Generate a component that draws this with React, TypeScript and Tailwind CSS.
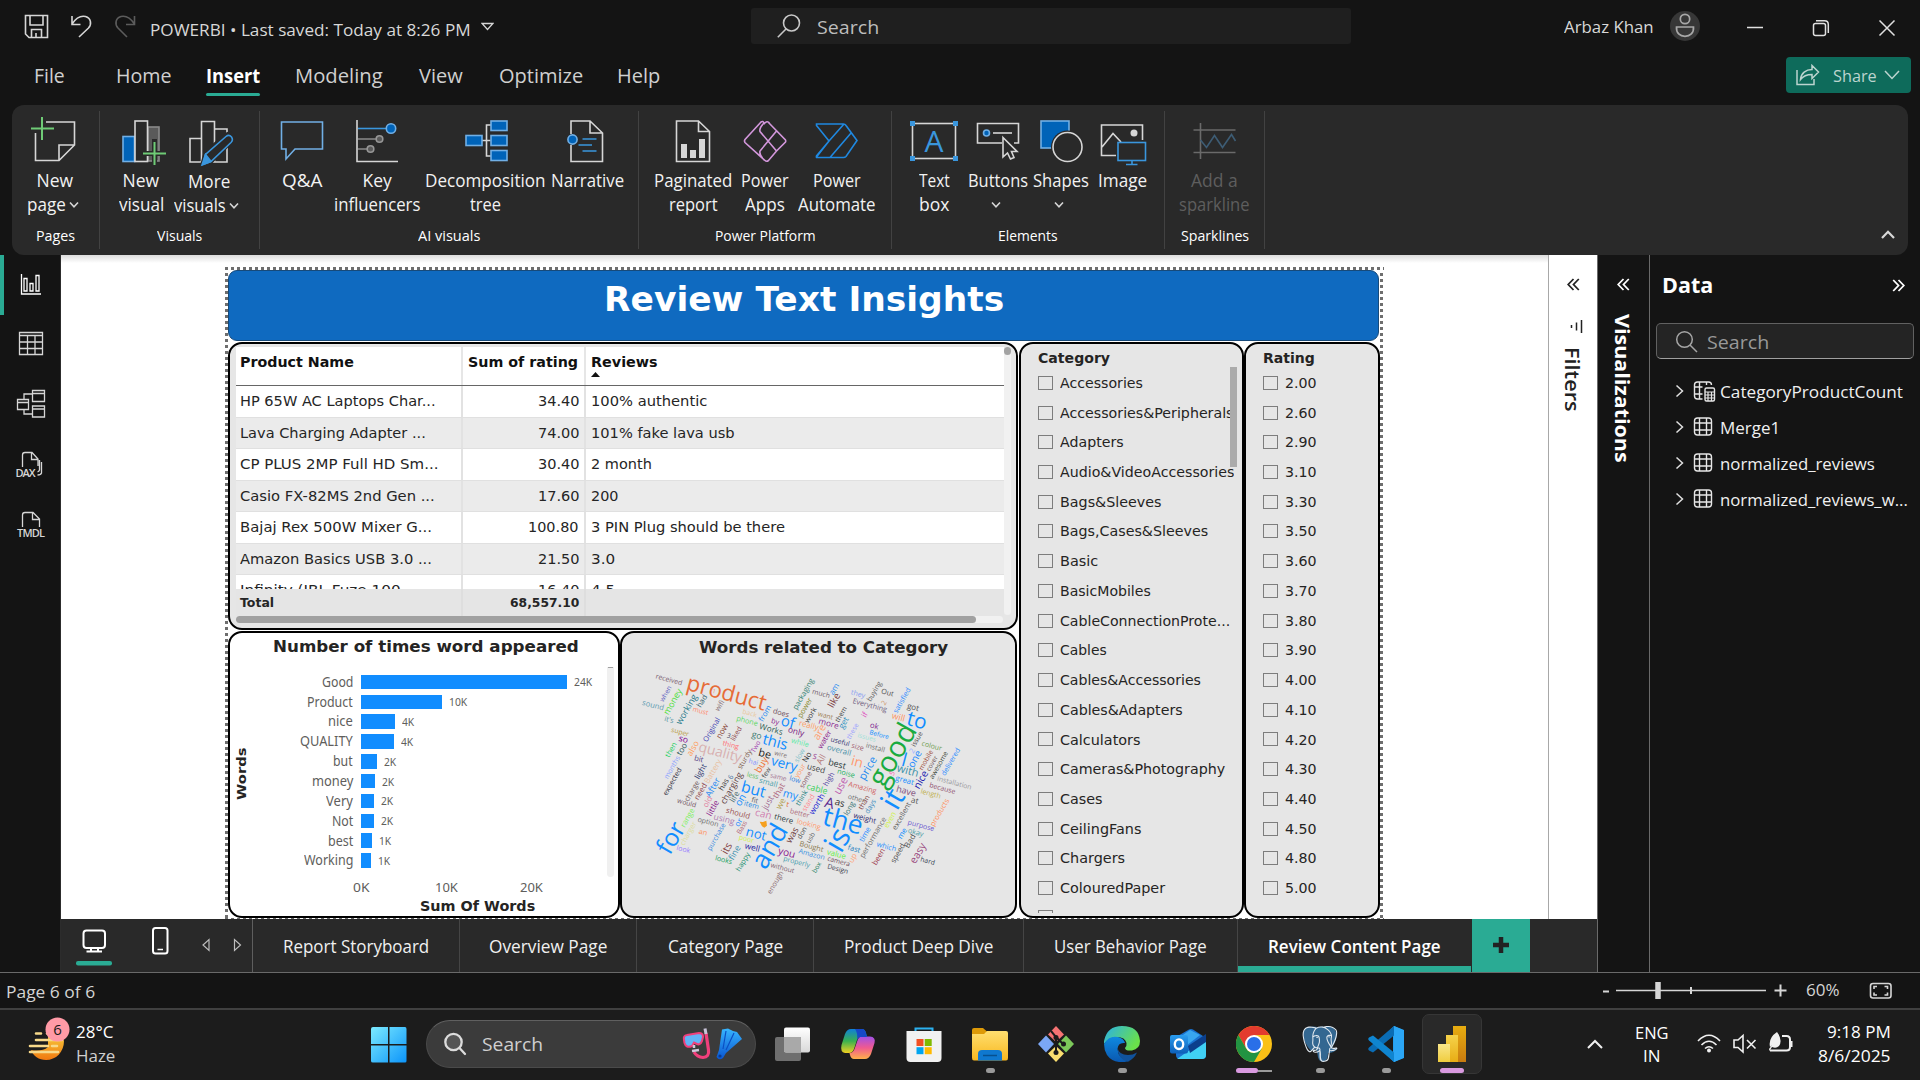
import React, { useLayoutEffect, useRef, useState } from "react";
import { SiPostgresql } from "react-icons/si";

/* Single-line text condensed or widened to an exact advance width. */
function T({ w, children, className = "" }: { w: number; children: React.ReactNode; className?: string }) {
  const ref = useRef<HTMLSpanElement>(null);
  const [k, setK] = useState(1);
  useLayoutEffect(() => {
    if (ref.current) setK(w / ref.current.offsetWidth);
  }, [w]);
  return (
    <span className={"inline-block shrink-0 whitespace-pre text-left " + className} style={{ width: w }}>
      <span ref={ref} className="inline-block origin-left" style={{ transform: `scaleX(${k})` }}>
        {children}
      </span>
    </span>
  );
}

const W = "#d6d6d6";

function Chev({ className = "" }: { className?: string }) {
  return (
    <svg width="10" height="8" viewBox="0 0 10 8" className={className} fill="none" stroke="#d6d6d6" strokeWidth="1.6">
      <path d="M1 1.5 5 5.8 9 1.5" />
    </svg>
  );
}

/* ---------- title bar ---------- */
function TitleBar() {
  return (
    <div className="flex h-[50px] items-start">
      <svg width="150" height="50" viewBox="0 0 150 50" fill="none" stroke={W} strokeWidth="1.6">
        <path d="M25.500 15.500H47.500V37.500H29L25.500 34ZM30 15.500V25H43V15.500M31.500 37.500V29.500H41.500V37.500M36 33V37" />
        <path d="M72 16V24.500H80.500M72 24C76 18 81 15.500 85.500 16.500C91 18 92 24 88.500 28L79 37" />
        <path d="M134.500 16V24.500H126M134.500 24C130.500 18 125.500 15.500 121 16.500C115.500 18 114.500 24 118 28L127 37" stroke="#5c5c5c" />
      </svg>
      <T w={321} className="mt-[16.500px] text-[17px] leading-[25px] text-[#d8d8d8]">POWERBI • Last saved: Today at 8:26 PM</T>
      <svg width="13" height="9" viewBox="0 0 13 9" className="mt-[22px] ml-[10px]" fill="none" stroke={W} strokeWidth="1.3">
        <path d="M1 1.500H12L6.500 7.500Z" />
      </svg>
      <div className="mt-[8px] ml-[257px] flex h-[36px] w-[600px] items-center rounded-[3px] bg-[#1f1f1f]">
        <svg width="24" height="24" viewBox="0 0 24 24" className="ml-[26px]" fill="none" stroke="#c8c8c8" strokeWidth="1.6">
          <circle cx="14.500" cy="9" r="8" />
          <path d="M9 15 .8 23.200" />
        </svg>
        <T w={62} className="mt-[2px] ml-[16px] text-[19px] text-[#bdbdbd]">Search</T>
      </div>
      <T w={90} className="mt-[14px] ml-[213px] text-[17px] leading-[25px] text-[#d8d8d8]">Arbaz Khan</T>
      <svg width="30" height="30" viewBox="0 0 30 30" className="mt-[11px] ml-[16px]" fill="none" stroke="#a8a8a8" strokeWidth="1.700">
        <circle cx="15" cy="15" r="15" fill="#373737" stroke="none" />
        <circle cx="15" cy="8" r="4.700" />
        <path d="M6.500 16H23.500C24 22 20 25.300 15 25.300S6 22 6.500 16Z" />
      </svg>
      <svg width="150" height="20" viewBox="0 0 150 20" className="mt-[18px] ml-[46px]" fill="none" stroke="#e0e0e0" strokeWidth="1.500">
        <path d="M1 9.500H17" />
        <rect x="67.500" y="5.500" width="12" height="12" rx="2" />
        <path d="M70 2.800H78.500C81 2.800 82.300 4.500 82.300 6.500V15" />
        <path d="M133.500 2.500 148.500 17.500M148.500 2.500 133.500 17.500" />
      </svg>
    </div>
  );
}

const MENU: [string, number, number][] = [
  ["File", 34, 31],
  ["Home", 51, 56],
  ["Insert", 34, 54],
  ["Modeling", 35, 88],
  ["View", 36, 44],
  ["Optimize", 36, 84],
  ["Help", 34, 43],
];

function MenuRow() {
  return (
    <div className="flex h-[55px] text-[20px] text-[#d0d0d0]">
      {MENU.map(([t, ml, w]) => (
        <div key={t} style={{ marginLeft: ml }} className="flex flex-col">
          <T w={w} className={"mt-[12px] leading-[28px] " + (t === "Insert" ? "font-bold text-white" : "")}>{t}</T>
          {t === "Insert" && <div className="mt-[3px] h-[3px] w-[54px] rounded-full bg-[#2aab94]" />}
        </div>
      ))}
      <div className="mt-[7px] mr-[9px] ml-auto flex h-[36px] w-[125px] items-center rounded-[4px] bg-[#0e6b5b] text-[17px] text-[#bcd4cf]">
        <svg width="24" height="22" viewBox="0 0 24 22" className="ml-[10px]" fill="none" stroke="#bcd4cf" strokeWidth="1.500">
          <path d="M1 6V20.500H18V15M4.500 15.500C5 9 10 5.500 16 5.500V1.500L22.500 8 16 14.500V10.500C11 10.500 7.500 11.500 4.500 15.500Z" />
        </svg>
        <T w={44} className="mt-px ml-[13px]">Share</T>
        <svg width="16" height="10" viewBox="0 0 16 10" className="ml-[7px]" fill="none" stroke="#bcd4cf" strokeWidth="1.500">
          <path d="M1 1 8 8.500 15 1" />
        </svg>
      </div>
    </div>
  );
}

/* ---------- ribbon ---------- */
type Line = [string, number] | null;
type Item = { c: number; w: number; icon: React.ReactNode; a: [string, number]; b: Line; chev?: boolean; dim?: boolean; dy?: boolean };

const green = "#6fcb76";
const lb = "#71afe5";
const fb = "#0063b8";
const mb = "#3a96dd";

const GROUPS: { w: number; pad: number; label: [string, number]; items: Item[] }[] = [
  {
    w: 88, pad: 13, label: ["Pages", 39],
    items: [{
      c: 55, w: 60, a: ["New", 37], b: ["page", 39], chev: true,
      icon: <g><path d="M46 122H74.500V145L59 160.500H35.500V133M59 160.500V145H74.500" stroke={W} /><path d="M42 117V140M31 128.500H54" stroke={green} strokeWidth="2" /></g>,
    }],
  },
  {
    w: 160, pad: 11, label: ["Visuals", 45],
    items: [
      {
        c: 141, w: 60, a: ["New", 37], b: ["visual", 45],
        icon: <g><rect x="148" y="127" width="11" height="34" fill="#5a5a5a" stroke="#8a8a8a" /><rect x="123" y="136.500" width="11.500" height="25" fill={fb} stroke={lb} /><rect x="135" y="121" width="12.500" height="40.500" fill="#292929" stroke={W} /><path d="M154.500 139V167M140 153.500H168" stroke="#292929" strokeWidth="5" /><path d="M154.500 142V165M143 153.500H166" stroke={green} strokeWidth="2" /></g>,
      },
      {
        c: 209, w: 75, a: ["More", 42], b: ["visuals", 52], chev: true, dy: true,
        icon: <g><path d="M190 138.500H201.500V162H190ZM201.500 121.500H214.500V162H201.500ZM214.500 129H227V162H214.500Z" stroke={W} /><path d="M203 164 206 153 226 135.500Q231 132 233 137Q233 140 230 142L211 161Z" fill="#292929" stroke="#292929" strokeWidth="5" /><path d="M203 164.500 205.500 154.500 226 136.500Q229 134 231.500 137Q233.500 140 231 142.500L211 161.500Z" stroke={mb} /><path d="M202 165 205.500 154.500 211 161.500Z" fill={mb} stroke={mb} /></g>,
      },
    ],
  },
  {
    w: 379, pad: 12, label: ["AI visuals", 62],
    items: [
      { c: 302, w: 60, a: ["Q&A", 40], b: null, icon: <path d="M281.500 122H322.500V149H295L286 159V149H281.500Z" stroke={lb} /> },
      {
        c: 377, w: 90, a: ["Key", 29], b: ["influencers", 86],
        icon: <g><path d="M357 120V161.500H398" stroke={W} /><path d="M358 128.500H388" stroke={mb} /><circle cx="391" cy="128.500" r="4.700" fill={fb} stroke={lb} /><path d="M358 139H376M358 149H367" stroke="#8a8a8a" /><circle cx="379.500" cy="139" r="3.300" fill="#5a5a5a" stroke="#979797" /><circle cx="370.500" cy="149" r="3.300" fill="#5a5a5a" stroke="#979797" /></g>,
      },
      {
        c: 485.5, w: 127, a: ["Decomposition", 121], b: ["tree", 31],
        icon: <g><path d="M481 140.500H490M491 125H486V156H491" stroke={W} /><g fill={fb} stroke={lb}><rect x="465.500" y="135.500" width="16" height="10" /><rect x="490.500" y="121" width="16" height="9.500" /><rect x="490.500" y="135.500" width="16" height="10" /><rect x="490.500" y="150.500" width="16" height="10" /></g></g>,
      },
      {
        c: 587.5, w: 77, a: ["Narrative", 73], b: null,
        icon: <g><path d="M570.500 134V121H589.500L602 133V161.500H570.500V145M589.500 121V133H602" stroke={W} /><circle cx="572" cy="139.500" r="4.600" fill={fb} stroke={lb} /><path d="M582 139H596M578 145H591.500M582 151H596" stroke={mb} /></g>,
      },
    ],
  },
  {
    w: 253, pad: 14, label: ["Power Platform", 101],
    items: [
      {
        c: 693, w: 80, a: ["Paginated", 78], b: ["report", 49],
        icon: <g><path d="M676.500 121H698.500L709.500 131.500V161.500H676.500ZM698.500 121V131.500H709.500" stroke={W} /><path d="M681 144H687V158H681ZM690 150H696V158H690ZM699 139H705V158H699Z" fill={W} /></g>,
      },
      {
        c: 765, w: 64, a: ["Power", 48], b: ["Apps", 40],
        icon: <path d="M761 122Q763 120.500 764 123Q759 128 760 131.500L776.500 151L768.500 160.500Q766.500 162 765 160.500L745 142.500Q744 141 745 139.500ZM768 122 785.500 140Q786 141 785.500 142L776.500 151M764 124Q767 120 769.500 123M776.500 131 760 151Q759 155 764 160" stroke="#d397dc" />,
      },
      {
        c: 837, w: 80, a: ["Power", 48], b: ["Automate", 78],
        icon: <path d="M816.500 124H843.500Q845 124 846 125.500L857 140.500L846 156.500Q845 157.500 843.500 157.500H817Q816 157.500 816.500 156L829 141 816.500 125.500ZM829 141 844 124M816.500 157 829 141M830 157.500 851.500 132.500" stroke="#1f88e0" />,
      },
    ],
  },
  {
    w: 273, pad: 9, label: ["Elements", 60],
    items: [
      {
        c: 934, w: 66, a: ["Text", 31], b: ["box", 30],
        icon: <g><rect x="912.500" y="123.500" width="43" height="35" stroke={W} /><g fill={mb}><rect x="910" y="121" width="5" height="5" /><rect x="953" y="121" width="5" height="5" /><rect x="910" y="156" width="5" height="5" /><rect x="953" y="156" width="5" height="5" /></g><text x="934" y="152" textAnchor="middle" fontSize="30" fill={mb} stroke="none">A</text></g>,
      },
      {
        c: 997, w: 61, a: ["Buttons", 60], b: null, chev: true,
        icon: <g><path d="M1001 143H976.500V123.500H1017.500V143H1013" stroke={W} /><circle cx="985.500" cy="133" r="3" fill={fb} stroke={lb} /><path d="M992 133H1011" stroke={W} /><path d="M1002 137.500 1016 151.500H1010.500L1013 157.500 1009.500 159 1006.500 153 1002 157Z" stroke={W} fill="#292929" /></g>,
      },
      {
        c: 1060.5, w: 65, a: ["Shapes", 56], b: null, chev: true,
        icon: <g><rect x="1040.500" y="121" width="28" height="27" fill={fb} stroke={lb} /><circle cx="1067" cy="147" r="16.500" fill="#292929" /><circle cx="1067" cy="147" r="14.500" stroke={W} /></g>,
      },
      {
        c: 1122, w: 58, a: ["Image", 49], b: null,
        icon: <g><path d="M1116 155.500H1101.500V125H1142.500V140M1102 147 1113 133.500 1121 142" stroke={W} /><circle cx="1134" cy="133" r="3.500" fill={W} /><rect x="1118" y="142.500" width="27.500" height="18" stroke={mb} /><path d="M1132 161V164M1126 164.500H1137.500" stroke={mb} /></g>,
      },
    ],
  },
  {
    w: 100, pad: 7, label: ["Sparklines", 68],
    items: [{
      c: 1214.5, w: 85, a: ["Add a", 47], b: ["sparkline", 71], dim: true,
      icon: <g stroke="#6a6a6a"><path d="M1193 130H1235M1193 152.500H1235M1200 123V159" /><path d="M1200 140 1206 147.500 1214 135.500 1222 147.500 1231 134.500 1235 141" stroke="#3d5c74" /></g>,
    }],
  },
];

function Ribbon() {
  return (
    <div className="mx-[12px] flex h-[150px] rounded-[12px] bg-[#292929]">
      {GROUPS.map((g) => (
        <div key={g.label[0]} className="mt-[6px] h-[138px] shrink-0 border-r border-[#424242]" style={{ width: g.w }}>
          <div className="flex h-[111px]" style={{ paddingLeft: g.pad }}>
            {g.items.map((it) => (
              <div key={it.c} className={"flex shrink-0 flex-col items-center text-[17.500px] leading-[24px] " + (it.dim ? "text-[#5e5e5e]" : "text-[#f2f2f2]")} style={{ width: it.w }}>
                <svg width="56" height="52" viewBox={`${it.c - 28} 116 56 52`} fill="none" strokeWidth="1.600" className="mt-[5px] shrink-0">{it.icon}</svg>
                <div className={"flex flex-col items-center " + (it.dy ? "mt-[1px]" : "mt-0")}>
                  <T w={it.a[1]}>{it.a[0]}</T>
                  <div className={"flex h-[24px] items-center gap-[3px] " + (it.chev ? "mr-[4px]" : "")}>
                    {it.b && <T w={it.b[1]}>{it.b[0]}</T>}
                    {it.chev && <Chev className="mt-px" />}
                  </div>
                </div>
              </div>
            ))}
          </div>
          <div className="flex justify-center text-[15px] leading-[22px] text-white">
            <T w={g.label[1]} className="mt-[2px]">{g.label[0]}</T>
          </div>
        </div>
      ))}
      <svg width="14" height="9" viewBox="0 0 14 9" className="mt-[125px] mr-[13px] ml-auto" fill="none" stroke="#d8d8d8" strokeWidth="2.200">
        <path d="M1 8 7 1.800 13 8" />
      </svg>
    </div>
  );
}

/* ---------- left rail ---------- */
function Rail() {
  return (
    <div className="w-[61px] shrink-0 border-r border-[#2c2c2c] bg-[#141414]">
      <svg width="60" height="300" viewBox="0 255 60 300" fill="none" stroke={W} strokeWidth="1.300">
        <rect x="0" y="255" width="4" height="60" fill="#2aab94" stroke="none" />
        <path d="M21.500 274V294H41M24 278.500H27V291H24ZM30 283.500H33V291H30ZM36 275.500H39V291H36Z" stroke="#fff" />
        <path d="M19.500 332.500H42.500V354.500H19.500ZM19.500 335.500H42.500M19.500 342H42.500M19.500 348.500H42.500M27.500 336V354.500M35 336V354.500" />
        <path d="M17.500 399.500H28.500V409.500H17.500ZM17.500 402.500H28.500M32.500 390.500H44.500V401.500H32.500ZM32.500 393.500H44.500M32.500 406H44.500V417H32.500ZM32.500 409H44.500M24 399V394H32M24 410V414H32" />
        <path d="M22.500 467V455Q22.500 452.500 25 452.500H32L38 459V466M31.500 453V459.500H38M41.500 462V473Q41 475 37.500 475M39.500 460V470Q39 471.500 37.500 472" />
        <path d="M22.500 527V515Q22.500 512.500 25 512.500H33L39.500 519V527M32.500 513V519.500H39" />
        <g fill={W} stroke="none" fontSize="11" fontWeight="600">
          <text x="15.500" y="476.500" textLength="20">DAX</text>
          <text x="17" y="536.500" textLength="28">TMDL</text>
        </g>
      </svg>
    </div>
  );
}

/* ---------- report visuals ---------- */
const ROWS: [string, number, string, string, number][] = [
  ["HP 65W AC Laptops Char...", 196, "34.40", "100% authentic", 116],
  ["Lava Charging Adapter ...", 186, "74.00", "101% fake lava usb", 144],
  ["CP PLUS 2MP Full HD Sm...", 198, "30.40", "2 month", 61],
  ["Casio FX-82MS 2nd Gen ...", 195, "17.60", "200", 27],
  ["Bajaj Rex 500W Mixer G...", 192, "100.80", "3 PIN Plug should be there", 194],
  ["Amazon Basics USB 3.0 ...", 192, "21.50", "3.0", 24],
  ["Infinity (JBL Fuze 100 ...", 180, "16.40", "4.5", 24],
];

function TableVisual() {
  return (
    <div className="h-[288px] w-[790px] overflow-hidden rounded-[14px] border-2 border-black bg-[#e6e6e6] pt-[3px] pl-[6px]">
      <div className="flex">
        <div className="h-[269px] w-[768px] overflow-hidden">
          <div className="flex h-[39px] border-b border-[#666] bg-white text-[13.500px] font-bold text-[#111]">
            <div className="w-[225px] pt-[5px] pl-[4px]"><T w={114}>Product Name</T></div>
            <div className="w-[2px] bg-[#e6e6e6]" />
            <div className="w-[121px] pt-[5px] pl-[5px]"><T w={110}>Sum of rating</T></div>
            <div className="w-[2px] bg-[#e6e6e6]" />
            <div className="flex flex-col pt-[5px] pl-[5px]">
              <T w={67}>Reviews</T>
              <svg width="9" height="5" viewBox="0 0 9 5"><path d="M0 5 4.500 0 9 5Z" fill="#111" /></svg>
            </div>
          </div>
          <div className="h-[203px] overflow-hidden text-[13.300px] text-[#252525]">
            {ROWS.map((r, i) => (
              <div key={r[0]} className={"flex h-[31.500px] items-center border-b-[1.500px] border-[#e0e0e0] " + (i % 2 ? "bg-[#ebebeb]" : "bg-white")}>
                <div className="w-[225px] pt-[2px] pl-[4px]"><T w={r[1]}>{r[0]}</T></div>
                <div className="h-full w-[2px] bg-[#e2e2e2]" />
                <div className="w-[121px] pt-[2px] pr-[5px] text-right"><T w={r[2].length === 6 ? 51 : 41.500}>{r[2]}</T></div>
                <div className="h-full w-[2px] bg-[#e2e2e2]" />
                <div className="pt-[2px] pl-[5px]"><T w={r[4]}>{r[3]}</T></div>
              </div>
            ))}
          </div>
          <div className="flex h-[27px] bg-[#e5e5e5] text-[12.500px] font-bold text-[#252525]">
            <div className="w-[225px] pt-[5px] pl-[4px]"><T w={34}>Total</T></div>
            <div className="w-[2px] bg-[#dedede]" />
            <div className="w-[121px] pt-[5px] pr-[5px] text-right"><T w={69}>68,557.10</T></div>
            <div className="w-[2px] bg-[#dedede]" />
          </div>
        </div>
        <div className="h-[268px] w-[7px] rounded-full bg-[#f1f1f1]">
          <div className="h-[8px] w-[7px] rounded-full bg-[#a3a3a3]" />
        </div>
      </div>
      <div className="h-[7px] w-[767px] rounded-full bg-[#f1f1f1]">
        <div className="h-[7px] w-[740px] rounded-full bg-[#a1a1a1]" />
      </div>
    </div>
  );
}

const BARS: [string, number, number, string][] = [
  ["Good", 31, 206, "24K"],
  ["Product", 46, 81, "10K"],
  ["nice", 25, 34, "4K"],
  ["QUALITY", 53, 33, "4K"],
  ["but", 20, 16, "2K"],
  ["money", 41, 13.8, "2K"],
  ["Very", 27, 13.4, "2K"],
  ["Not", 21, 12.8, "2K"],
  ["best", 25, 11, "1K"],
  ["Working", 49, 10, "1K"],
];

function BarVisual() {
  return (
    <div className="flex h-[287px] w-[392px] flex-col overflow-hidden rounded-[14px] border-2 border-black bg-white">
      <T w={306} className="mt-[2px] ml-[43px] text-[16px] leading-[24px] font-bold text-[#252423]">Number of times word appeared</T>
      <div className="mt-[9px] flex h-[212px]">
        <div className="flex w-[21px] items-center justify-center">
          <span className="-rotate-90"><T w={52} className="mb-[-8px] text-[12.500px] font-bold text-[#252423]">Words</T></span>
        </div>
        <div className="w-[356px] pt-[4px] pl-px font-['Noto_Sans'] text-[13.500px] text-[#605e5c]">
          {BARS.map(([t, w, b, v]) => (
            <div key={t} className="flex h-[19.850px] items-center">
              <div className="flex w-[101px] justify-end"><T w={w}>{t}</T></div>
              <div className="ml-[8px] h-[14.500px] bg-[#118dff]" style={{ width: b }} />
              <T w={v.length > 2 ? 18 : 12.500} className="ml-[7px] text-[11.500px]">{v}</T>
            </div>
          ))}
        </div>
        <div className="mt-[-1px] h-[210px] w-[7px] rounded-b-full bg-[#f0f0f0]">
          <div className="mx-auto h-px w-[5px] bg-[#a0a0a0]" />
        </div>
      </div>
      <div className="mt-[-1px] flex font-['Noto_Sans'] text-[13px] leading-[18px] text-[#605e5c]">
        <T w={16} className="ml-[123px]">0K</T>
        <T w={23} className="ml-[66px]">10K</T>
        <T w={23} className="ml-[62px]">20K</T>
      </div>
      <T w={115} className="ml-[190px] text-[14px] leading-[20px] font-bold text-[#252423]">Sum Of Words</T>
    </div>
  );
}

/* word, centre x, centre y, length, colour */
type Word = [string, number, number, number, string];
const FLAT: Word[] = [
  ["received", 147, 149, 82, "#7a6070"], ["product", 319, 192, 245, "#e66c37"], ["1", 282, 184, 10, "#f0905a"], ["sound", 99, 226, 66, "#5a9ab0"],
  ["it's", 147, 269, 28, "#4a90a0"], ["must", 241, 243, 48, "#ff8a70"], ["super", 180, 306, 54, "#b89a40"], ["so", 190, 328, 28, "#800090"],
  ["quality", 300, 368, 132, "#d8b0b0"], ["thing", 332, 345, 50, "#ff6a70"], ["back", 389, 250, 44, "#e8c8a0"], ["phone", 381, 273, 66, "#5ed868"],
  ["does", 483, 249, 50, "#705060"], ["by", 465, 275, 24, "#8a2a90"], ["of", 503, 278, 42, "#118dff"], ["Works", 453, 298, 72, "#2a5a50"],
  ["only", 528, 305, 50, "#7a1a80"], ["really", 566, 286, 60, "#ff9a60"], ["more", 626, 281, 62, "#8a2a90"], ["want", 616, 257, 46, "#9a7a50"],
  ["much", 603, 191, 54, "#705a68"], ["they", 714, 192, 44, "#8aa0f0"], ["Everything", 749, 226, 106, "#706080"], ["Out", 802, 188, 38, "#505050"],
  ["got", 879, 232, 36, "#505050"], ["will", 835, 262, 40, "#ff9060"], ["to", 890, 274, 60, "#118dff"], ["ok", 763, 288, 26, "#7a1a90"],
  ["Before", 777, 314, 60, "#118dff"], ["issues", 740, 322, 56, "#a0e0d8"], ["while", 540, 338, 54, "#60eaa8"], ["useful", 660, 335, 58, "#303070"],
  ["size", 713, 351, 38, "#a06070"], ["install", 766, 353, 58, "#707070"], ["overall", 657, 361, 74, "#4a90a8"], ["best", 651, 403, 54, "#303f3f"],
  ["noise", 678, 430, 54, "#20b060"], ["in", 711, 397, 36, "#ff9a70"], ["used", 588, 416, 56, "#404040"], ["bit", 236, 387, 28, "#503a80"],
  ["be", 434, 372, 38, "#202020"], ["go", 410, 316, 30, "#3a7a70"], ["this", 465, 338, 76, "#118dff"], ["wire", 482, 373, 38, "#807070"],
  ["hai", 400, 396, 28, "#8090ff"], ["very", 492, 403, 80, "#118dff"], ["same", 475, 441, 50, "#a07090"], ["low", 525, 449, 34, "#2f80e0"],
  ["small", 445, 458, 56, "#4aa0a8"], ["less", 398, 437, 36, "#60c060"], ["but", 400, 480, 74, "#118dff"], ["my", 511, 495, 46, "#118dff"],
  ["cable", 591, 477, 64, "#40d060"], ["item", 394, 525, 46, "#2a8ae0"], ["fit", 404, 511, 20, "#606060"], ["can", 430, 553, 50, "#d080b0"],
  ["should", 354, 550, 74, "#9a5050"], ["better", 539, 550, 60, "#b07080"], ["t", 503, 524, 8, "#e07030"], ["there", 491, 567, 58, "#304040"],
  ["using", 312, 568, 64, "#b080b0"], ["option", 264, 576, 64, "#707070"], ["would", 200, 519, 58, "#705060"], ["an", 249, 607, 26, "#ff9060"],
  ["look", 190, 658, 42, "#9a80ff"], ["looks", 311, 690, 52, "#20a060"], ["not", 408, 613, 62, "#118dff"], ["poor", 379, 627, 46, "#d0f050"],
  ["well", 397, 653, 46, "#2020a0"], ["looking", 566, 583, 74, "#ff9a70"], ["you", 500, 669, 52, "#8a1a90"], ["properly", 530, 696, 82, "#4aa0b0"],
  ["without", 487, 714, 72, "#806070"], ["Bought", 574, 650, 74, "#8a7a50"], ["Amazon", 575, 673, 80, "#3a90e0"], ["value", 649, 673, 58, "#60f040"],
  ["camera", 656, 694, 70, "#705060"], ["Design", 653, 717, 64, "#404050"], ["the", 668, 577, 121, "#118dff"], ["weight", 734, 565, 70, "#302a70"],
  ["other", 709, 506, 52, "#707070"], ["A", 628, 521, 28, "#5a2a90"], ["as", 659, 519, 30, "#303030"], ["Amazing", 727, 473, 86, "#d06060"],
  ["great", 854, 451, 56, "#118dff"], ["with", 863, 423, 66, "#3a8fa8"], ["have", 858, 484, 60, "#805080"], ["at", 884, 512, 22, "#505050"],
  ["colour", 935, 348, 62, "#70a050"], ["installation", 1003, 459, 106, "#9a9aa0"], ["because", 967, 475, 80, "#905070"], ["length", 932, 491, 62, "#c0b050"],
  ["purpose", 903, 587, 82, "#7060d0"], ["okay", 887, 607, 48, "#50a0a8"], ["which", 799, 650, 60, "#2a90ff"], ["fast", 702, 657, 38, "#2080c0"],
  ["hard", 923, 693, 44, "#304050"], ["S", 584, 380, 12, "#9a3a90"], ["l", 852, 393, 14, "#118dff"], ["3", 326, 317, 11, "#404060"],
];
const STEEP: Word[] = [
  ["when", 138, 191, 52, "#5a5ac0"], ["money", 160, 215, 86, "#50e040"], ["working", 201, 238, 100, "#1f7a8a"], ["had", 247, 213, 40, "#2f5f6f"],
  ["wifi", 300, 227, 34, "#806a70"], ["Original", 276, 299, 80, "#3a3ab0"], ["now", 308, 303, 48, "#8a4a3a"], ["liked", 350, 311, 46, "#904a50"],
  ["from", 436, 250, 52, "#1f8af0"], ["then", 154, 359, 48, "#20d060"], ["too", 187, 357, 38, "#305a5a"], ["also", 220, 355, 48, "#ffa060"],
  ["months", 157, 412, 76, "#8aa0ff"], ["expected", 158, 454, 92, "#303040"], ["light", 243, 424, 48, "#303a70"], ["Battery", 280, 424, 80, "#e8c0a0"],
  ["charge", 217, 483, 68, "#705a60"], ["need", 243, 484, 54, "#904a50"], ["After", 280, 472, 62, "#2a8af0"], ["old", 264, 515, 34, "#e080a0"],
  ["little", 280, 534, 50, "#8a1a8a"], ["has", 312, 463, 38, "#404040"], ["6", 333, 441, 12, "#3a6a9a"], ["charging", 336, 474, 106, "#604040"], ["life", 345, 500, 34, "#4a6a70"],
  ["on", 363, 510, 36, "#118dff"], ["range", 204, 563, 62, "#80f060"], ["charger", 206, 610, 78, "#dcdc9c"], ["for", 157, 625, 98, "#118dff"],
  ["purchase", 290, 620, 92, "#3a8ae0"], ["or", 357, 577, 24, "#1f8aff"], ["Bass", 367, 592, 42, "#b06070"], ["its", 322, 655, 34, "#804040"],
  ["fine", 345, 668, 46, "#3a90b0"], ["happy", 370, 695, 62, "#209070"], ["and", 453, 650, 140, "#118dff"], ["enough", 467, 757, 76, "#8a6a70"],
  ["box", 591, 712, 34, "#208060"], ["was", 518, 615, 50, "#704040"], ["don", 547, 608, 38, "#505050"], ["usb", 573, 623, 34, "#606060"],
  ["packaging", 551, 192, 104, "#2f7f70"], ["power", 556, 233, 66, "#8a8a30"], ["work", 573, 255, 50, "#404040"], ["am", 644, 177, 36, "#1f8af0"],
  ["like", 644, 211, 46, "#7a3a40"], ["them", 664, 253, 50, "#404040"], ["get", 672, 278, 36, "#2a90c0"], ["are", 600, 306, 48, "#ffa070"],
  ["water", 615, 328, 60, "#8a1a8a"], ["these", 699, 303, 52, "#9aa0ff"], ["if", 735, 254, 14, "#e050c0"], ["buying", 764, 184, 66, "#606060"],
  ["2", 793, 218, 12, "#d09a70"], ["satisfied", 847, 211, 84, "#2a8aff"], ["Two", 408, 350, 38, "#a040b0"], ["sturdy", 375, 388, 64, "#806050"],
  ["buy", 426, 405, 50, "#f07030"], ["few", 440, 428, 34, "#404040"], ["slow", 540, 376, 44, "#80c0c8"], ["No", 562, 381, 32, "#303030"],
  ["All", 605, 388, 30, "#b07070"], ["your", 541, 422, 46, "#ffa070"], ["some", 558, 449, 54, "#805060"], ["high", 628, 447, 44, "#5040a0"],
  ["use", 664, 467, 54, "#c060b0"], ["think", 546, 503, 50, "#208080"], ["stand", 566, 518, 56, "#ff8a90"], ["worth", 592, 522, 68, "#1a1ad0"],
  ["that", 478, 482, 48, "#b06a80"], ["just", 445, 518, 44, "#a06a90"], ["we", 484, 521, 34, "#b0a050"], ["price", 745, 415, 76, "#1f8af0"],
  ["good", 822, 376, 204, "#1aab40"], ["it", 824, 509, 54, "#118dff"], ["one", 886, 387, 54, "#1f8aff"], ["2", 878, 362, 13, "#a0b0ff"], ["5", 818, 430, 12, "#ff50b0"],
  ["issue", 892, 327, 48, "#404040"], ["mobile", 919, 390, 66, "#a05040"], ["cover", 937, 400, 50, "#705a60"], ["awesome", 957, 405, 92, "#404a40"],
  ["delivered", 993, 395, 92, "#2a8aff"], ["nice", 904, 449, 58, "#2020b0"], ["long", 689, 535, 44, "#2f7070"], ["than", 733, 517, 46, "#804040"],
  ["days", 752, 529, 46, "#3a8ac0"], ["time", 736, 613, 48, "#2f90ff"], ["performance", 760, 622, 138, "#707070"], ["even", 811, 569, 52, "#d0f050"],
  ["excellent", 846, 558, 92, "#606060"], ["products", 960, 547, 92, "#ff9060"], ["me", 848, 610, 34, "#118dff"], ["Bad", 871, 633, 44, "#505050"],
  ["speed", 835, 669, 64, "#505050"], ["been", 777, 680, 54, "#a04050"], ["easy", 895, 670, 66, "#9a4a80"], ["up", 699, 684, 28, "#ffa070"], ["is", 658, 631, 66, "#118dff"],
];

const ctx = document.createElement("canvas").getContext("2d")!;
function sizeFor(word: string, len: number) {
  ctx.font = '100px "Open Sans"';
  return (len * 100) / ctx.measureText(word).width;
}

function WordCloud() {
  const draw = (angle: number) => (w: Word) => {
    const s = sizeFor(w[0], w[3]);
    return (
      <text key={w[0] + w[1]} transform={`translate(${w[1]} ${w[2]}) rotate(${angle})`} y={s * 0.27} fontSize={s} fill={w[4]} textAnchor="middle">{w[0]}</text>
    );
  };
  return (
    <div className="h-[287px] w-[397px] overflow-hidden rounded-[14px] border-2 border-black bg-[#e6e6e6]">
      <div className="flex h-[30px] justify-center pt-[3px] pl-[10px] text-[16px] leading-[24px] font-bold text-[#252423]">
        <T w={249}>Words related to Category</T>
      </div>
      <svg width="393" height="250" viewBox="6 98 1179 750" fontFamily="Open Sans">
        {FLAT.map(draw(15))}
        {STEEP.map(draw(-60))}
        <path d="M419 574 429 575 439 571 441 586 433 592 426 588Z" fill="#f5a01f" />
      </svg>
    </div>
  );
}

function Check({ label, w }: { label: string; w: number }) {
  return (
    <div className="flex h-[29.720px] shrink-0 items-center text-[#252423]">
      <div className="mb-[2px] h-[14px] w-[15px] shrink-0 border border-[#7d7d7d]" />
      <T w={w} className="ml-[7px] text-[13.300px]">{label}</T>
    </div>
  );
}

const CATS: [string, number][] = [
  ["Accessories", 83], ["Accessories&Peripherals", 173], ["Adapters", 64], ["Audio&VideoAccessories", 174], ["Bags&Sleeves", 101],
  ["Bags,Cases&Sleeves", 148], ["Basic", 38], ["BasicMobiles", 91], ["CableConnectionProte...", 170], ["Cables", 47], ["Cables&Accessories", 141],
  ["Cables&Adapters", 123], ["Calculators", 80], ["Cameras&Photography", 165], ["Cases", 42], ["CeilingFans", 81], ["Chargers", 65], ["ColouredPaper", 105],
];
const RATINGS = ["2.00", "2.60", "2.90", "3.10", "3.30", "3.50", "3.60", "3.70", "3.80", "3.90", "4.00", "4.10", "4.20", "4.30", "4.40", "4.50", "4.80", "5.00"];

function Canvas() {
  return (
    <div className="flex h-[664px] w-[1487px] flex-col overflow-hidden bg-white bg-[linear-gradient(180deg,#dcdcdc_0px,#ffffff_8px)] pl-[164px]">
      <div className="mt-[12px] h-[3px] w-[1159px] shrink-0 bg-[repeating-linear-gradient(90deg,#6e6e6e_0px_3px,transparent_3px_6px)]" />
      <div className="flex h-[648px] shrink-0">
        <div className="w-[3px] bg-[repeating-linear-gradient(180deg,transparent_0px_3px,#6e6e6e_3px_6px)]" />
        <div className="flex w-[1152px] shrink-0 flex-col font-['DejaVu_Sans']">
          <div className="flex h-[71px] w-[1151px] justify-center rounded-[9px] border border-[#174a7a] bg-[#0f6ac0] text-[33px] leading-[40px] font-bold text-white">
            <T w={400} className="mt-[9px]">Review Text Insights</T>
          </div>
          <div className="mt-px flex">
            <div className="flex w-[791px] flex-col">
              <TableVisual />
              <div className="mt-px flex">
                <BarVisual />
                <WordCloud />
              </div>
            </div>
            <div className="flex h-[576px] w-[225px] overflow-hidden rounded-[14px] border-2 border-black bg-[#e6e6e6]">
              <div className="flex h-[569px] w-[213px] shrink-0 flex-col overflow-hidden pl-[17px]">
                <T w={72} className="mt-[4px] h-[21px] shrink-0 text-[13.500px] leading-[20px] font-bold text-[#252423]">Category</T>
                {CATS.map(([c, w]) => <Check key={c} label={c} w={w} />)}
                <div className="mt-[6px] h-[14px] w-[15px] shrink-0 border border-[#7d7d7d]" />
              </div>
              <div className="z-10 mt-[23px] ml-[-4px] h-[100px] w-[7px] shrink-0 bg-[#ababab]" />
            </div>
            <div className="flex h-[576px] w-[136px] flex-col overflow-hidden rounded-[14px] border-2 border-black bg-[#e6e6e6] pl-[17px]">
              <T w={52} className="mt-[4px] h-[21px] shrink-0 text-[13.500px] leading-[20px] font-bold text-[#252423]">Rating</T>
              {RATINGS.map((c) => <Check key={c} label={c} w={32} />)}
            </div>
          </div>
        </div>
        <div className="w-[3px] bg-[repeating-linear-gradient(180deg,transparent_0px_3px,#6e6e6e_3px_6px)]" />
      </div>
      <div className="h-[1px] w-[1159px] shrink-0 bg-[repeating-linear-gradient(90deg,#6e6e6e_0px_3px,transparent_3px_6px)]" />
    </div>
  );
}

/* ---------- page tabs ---------- */
const TABS: [string, number, number][] = [
  ["Report Storyboard", 207, 146], ["Overview Page", 177, 118], ["Category Page", 177, 115], ["Product Deep Dive", 210, 149], ["User Behavior Page", 214, 153],
];

function PageTabs() {
  return (
    <div className="flex h-[53px] w-[1536px] bg-[#292929] text-[18px] text-[#f0f0f0]">
      <svg width="192" height="53" viewBox="61 919 192 53" fill="none" stroke="#fff" strokeWidth="2">
        <rect x="83.500" y="930.500" width="21.500" height="17.500" rx="3" />
        <path d="M91 948V951.500M98 948V951.500M86.500 951.500H102" />
        <rect x="153" y="928" width="14.500" height="25.500" rx="2.500" />
        <path d="M157.500 949.500H163" strokeWidth="1.500" />
        <path d="M209 939.500V950.500L203 945ZM234.500 939.500V950.500L240.500 945Z" stroke="#bdbdbd" strokeWidth="1.200" />
        <rect x="76" y="961" width="36" height="4.500" rx="2" fill="#2aab94" stroke="none" />
        <path d="M252.500 919V972" stroke="#5e5e5e" strokeWidth="1" />
      </svg>
      {TABS.map(([t, w, tw]) => (
        <div key={t} className="flex justify-center border-r border-[#454545] pt-[14px] leading-[27px]" style={{ width: w }}>
          <T w={tw}>{t}</T>
        </div>
      ))}
      <div className="flex w-[233px] justify-center border-b-[6px] border-[#2aab94] pt-[14px] leading-[27px] font-semibold text-white">
        <T w={173} className="mr-px">Review Content Page</T>
      </div>
      <div className="ml-px flex w-[58px] justify-center bg-[#2aab94]">
        <svg width="18" height="18" viewBox="0 0 18 18" className="mt-[17px]"><path d="M9 1V17M1 9H17" stroke="#222" strokeWidth="4.500" /></svg>
      </div>
    </div>
  );
}

/* ---------- right panes ---------- */
function Dbl({ color, flip }: { color: string; flip?: boolean }) {
  return (
    <svg width="13" height="13" viewBox="0 0 13 13" fill="none" stroke={color} strokeWidth="1.800" className={flip ? "rotate-180" : ""}>
      <path d="M6.500 1 1.200 6.500 6.500 12M11.800 1 6.500 6.500 11.800 12" />
    </svg>
  );
}

const TABLES: [string, number][] = [["CategoryProductCount", 183], ["Merge1", 60], ["normalized_reviews", 155], ["normalized_reviews_w...", 188]];

function RightPanes() {
  return (
    <>
      <div className="flex w-[52px] shrink-0 flex-col items-center border-l border-[#6a6a6a] pt-[23px]">
        <Dbl color="#fff" />
        <div className="mt-[23px] mr-[4px] h-[150px] w-[30px]">
          <div className="flex h-[30px] w-[150px] origin-top-left translate-x-[30px] rotate-90 items-center text-[20px] leading-[30px] font-bold text-white">
            <T w={149}>Visualizations</T>
          </div>
        </div>
      </div>
      <div className="flex w-[271px] flex-col border-l border-[#6a6a6a]">
        <div className="flex items-center pt-[14px] pr-[15px] pl-[12px]">
          <T w={51} className="text-[21.500px] leading-[32px] font-bold text-white">Data</T>
          <span className="ml-auto"><Dbl color="#fff" flip /></span>
        </div>
        <div className="mt-[22px] ml-[6px] flex h-[36px] w-[258px] items-center rounded-[5px] border border-[#616161] border-b-[#a0a0a0] bg-[#242424]">
          <svg width="23" height="23" viewBox="0 0 23 23" className="ml-[18px]" fill="none" stroke="#a6a6a6" strokeWidth="1.500">
            <circle cx="9.500" cy="9.500" r="7.800" /><path d="M15 15 22 22" />
          </svg>
          <T w={62} className="mt-[2px] ml-[9px] text-[19px] text-[#999]">Search</T>
        </div>
        <div className="mt-[14px]">
          {TABLES.map(([t, w], i) => (
            <div key={t} className="flex h-[36px] items-center text-[17px] text-[#f0f0f0]">
              <svg width="9" height="14" viewBox="0 0 9 14" className="ml-[25px]" fill="none" stroke="#e0e0e0" strokeWidth="1.500"><path d="M1.500 1.500 7.500 7 1.500 12.500" /></svg>
              <svg width="24" height="22" viewBox="0 0 24 22" className="ml-[9px]" fill="none" stroke="#e6e6e6" strokeWidth="1.400">
                <rect x="1.500" y="2" width="17" height="17" rx="3" />
                <path d="M1.500 7H18.500M1.500 14H18.500M6.500 2V19M13.500 2V19" />
                {i === 0 && <g><rect x="9.500" y="5" width="13" height="18" fill="#141414" stroke="none" /><rect x="12" y="8" width="9.500" height="13" rx="1.500" /><path d="M12 12H21.500M12 15H21.500M12 18H21.500M15 12V21M18.500 12V21" strokeWidth="1.200" /></g>}
              </svg>
              <T w={w} className="mt-[2px] ml-[3px]">{t}</T>
            </div>
          ))}
        </div>
      </div>
    </>
  );
}

function StatusBar() {
  return (
    <div className="flex h-[38px] items-start border-t border-[#6a6a6a] border-b-[2px] border-b-[#404040] bg-[#141414] text-[17px] text-[#d4d4d4]">
      <T w={89} className="mt-[6px] ml-[6px] leading-[25px]">Page 6 of 6</T>
      <svg width="190" height="34" viewBox="1600 973 190 34" className="ml-[1505px] shrink-0" stroke={W}>
        <path d="M1603 991.500H1609" strokeWidth="2" />
        <path d="M1616 990.500H1766" strokeWidth="1.300" />
        <path d="M1658 982V999" strokeWidth="5.500" />
        <path d="M1691 987V994" strokeWidth="2" />
        <path d="M1774.500 990.500H1786.500M1780.500 984.500V996.500" strokeWidth="2" />
      </svg>
      <T w={34} className="mt-[4px] ml-[16px] leading-[25px]">60%</T>
      <svg width="24" height="18" viewBox="0 0 24 18" className="mt-[9px] ml-[29px]" fill="none" stroke={W} strokeWidth="1.600">
        <rect x="1.500" y="1.500" width="20.500" height="14.500" rx="2.500" />
        <path d="M8 4.500H5V7M5 10.500V13H8M15.500 4.500H18.500V7M18.500 10.500V13H15.500" />
      </svg>
    </div>
  );
}

/* ---------- taskbar ---------- */
function App36({ children, dot }: { children: React.ReactNode; dot?: boolean }) {
  return (
    <div className="flex w-[66px] shrink-0 flex-col items-center pt-[16px]">
      <svg width="36" height="36" viewBox="0 0 36 36">{children}</svg>
      {dot && <div className="mt-[6px] h-[5px] w-[9px] rounded-full bg-[#9a9a9a]" />}
    </div>
  );
}

function Grad({ id, a, b, c, x2 = 0, y2 = 1 }: { id: string; a: string; b: string; c?: string; x2?: number; y2?: number }) {
  return (
    <linearGradient id={id} x1="0" y1="0" x2={x2} y2={y2}>
      <stop offset="0" stopColor={a} />
      {c && <stop offset="0.5" stopColor={c} />}
      <stop offset="1" stopColor={b} />
    </linearGradient>
  );
}

function Taskbar() {
  return (
    <div className="flex h-[70px] bg-[#1c1c1c] text-white">
      <svg width="76" height="70" viewBox="0 1010 76 70">
        <defs><Grad id="sun" a="#f7c63a" b="#f0780f" /></defs>
        <path d="M31 1050C33 1056 39 1060 46 1060C56 1060 64 1052 64 1041L62 1036H48V1047C44 1051 36 1051 31 1050Z" fill="url(#sun)" />
        <path d="M36 1033.500H41M47 1033.500H52M36 1040H62M30 1046H48M52 1046H57M30 1052H58" stroke="#f7d98a" strokeWidth="2.600" strokeLinecap="round" />
        <circle cx="57.500" cy="1029.500" r="12" fill="#ff9aa6" />
        <text x="57.500" y="1035" fontSize="15" textAnchor="middle" fill="#1a1a1a">6</text>
      </svg>
      <div className="flex w-[295px] flex-col pt-[10px] text-[16.500px] leading-[24px]">
        <T w={37}>28°C</T>
        <T w={39} className="text-[#cfcfcf]">Haze</T>
      </div>
      <svg width="36" height="36" viewBox="0 0 36 36" className="mt-[16.500px]">
        <defs><linearGradient id="win" gradientUnits="userSpaceOnUse" x1="0" y1="0" x2="36" y2="36"><stop offset="0" stopColor="#7cebff" /><stop offset="1" stopColor="#0a93fa" /></linearGradient></defs>
        <path d="M0 2Q0 0 2 0H17V17H0ZM18.500 0H34Q35.500 0 35.500 2V17H18.500ZM0 18.500H17V35.500H2Q0 35.500 0 34ZM18.500 18.500H35.500V34Q35.500 35.500 34 35.500H18.500Z" fill="url(#win)" />
      </svg>
      <div className="mt-[10px] ml-[19px] flex h-[48px] w-[330px] items-center rounded-full border border-[#4a4a4a] border-t-[#606060] bg-[#3b3b3b]">
        <svg width="23" height="24" viewBox="0 0 23 24" className="ml-[17px]" fill="#555" stroke="#dcdcdc" strokeWidth="2.300">
          <circle cx="9.500" cy="10" r="8.200" /><path d="M15.500 16 21 22" strokeLinecap="round" />
        </svg>
        <T w={61} className="mt-px ml-[15px] text-[18px] text-[#cfcfcf]">Search</T>
        <svg width="61" height="34" viewBox="683 1027 61 34" className="ml-[139px]" fill="none">
          <defs><Grad id="fin" a="#37b6ff" b="#0a55d0" /></defs>
          <path d="M707 1033 709.500 1050Q710.500 1057 704 1057.500Q698 1057 695 1052" stroke="#f0407c" strokeWidth="3.200" />
          <path d="M706 1028.500 707 1034" stroke="#c9c4d8" strokeWidth="3" />
          <path d="M685 1040Q684 1035.500 688 1035L700 1033Q704 1033 704 1037L703 1041Q701 1045.500 698 1044L695 1042.500 693 1046Q687 1048.500 685.500 1043Z" fill="#62b4f7" stroke="#f0407c" strokeWidth="2" />
          <path d="M693 1051 700 1050M695 1045V1048" stroke="#cfc8dc" strokeWidth="2.500" />
          <path d="M723 1029.500 729 1028.500 734 1031 738 1032 743 1039 727 1053 724 1058Q720 1061 717.500 1057L720 1050Z" fill="url(#fin)" />
          <path d="M727 1031 724 1049M735 1033 727 1050" stroke="#0b4fc4" strokeWidth="1.200" />
          <circle cx="721" cy="1056" r="1.600" fill="#0a3a90" />
        </svg>
      </div>
      <div className="ml-[3px] flex">
        <App36>
          <defs><Grad id="tv" a="#ffffff" b="#d8d8d8" /></defs>
          <rect x="1" y="11" width="26" height="24" rx="2" fill="#6f6f6f" /><rect x="10" y="1.500" width="26" height="25" rx="2" fill="url(#tv)" /><path d="M10 11H27V26.500H12Q10 26.500 10 24.500Z" fill="#a9a9a9" />
        </App36>
        <App36>
          <defs><Grad id="cp1" a="#0f7fd8" b="#f0d020" c="#38b050" /><Grad id="cp2" a="#a050e8" b="#ffb04a" c="#f05a90" /></defs>
          <path d="M11 3H22Q25 3 26 7L27 11H20Q18 11 17 14L14 23Q12.500 27 9 27H5Q0 26 1.500 19L5 8Q7 3 11 3Z" fill="url(#cp1)" />
          <path d="M25 33H14Q11 33 10 29L9.500 27Q13 27 14.500 23L18 13Q19 10.500 22 10.500H30Q36 11 34.500 17L31 28Q29 33 25 33Z" fill="url(#cp2)" />
          <path d="M15 3H22Q25 3 26 7L27 11H20Q18 11 17 14Q18 7 15 3Z" fill="#1648c8" />
        </App36>
        <App36>
          <path d="M9.500 7V2.500H26.500V7" fill="none" stroke="#2bb1f0" strokeWidth="2" />
          <path d="M.5 5H35.500V32Q35.500 36 31.500 36H4.500Q.5 36 .5 32Z" fill="#f1f1f1" />
          <path d="M10.500 13H17.500V20H10.500Z" fill="#f25022" /><path d="M18.700 13H25.700V20H18.700Z" fill="#7fba00" /><path d="M10.500 21.200H17.500V28.200H10.500Z" fill="#00a4ef" /><path d="M18.700 21.200H25.700V28.200H18.700Z" fill="#ffb900" />
        </App36>
        <App36 dot>
          <defs><Grad id="fo" a="#ffdf70" b="#f8b81f" /></defs>
          <path d="M0 4Q0 2 2 2H11L15 5.500V10H0Z" fill="#dd9a08" /><path d="M0 8H12L15 5H34Q36 5 36 7V32Q36 34.500 34 34.500H2Q0 34.500 0 32Z" fill="url(#fo)" />
          <path d="M6 34.500V28Q6 24 10 24H26Q30 24 30 28V34.500Z" fill="#0f78cf" /><path d="M11 29.500H25" stroke="#07508f" strokeWidth="1.500" />
        </App36>
        <App36>
          <path d="M18 0 26 8.500 18 16 10 8.500Z" fill="#f57373" /><path d="M28 9.500 36 18 28 26.500 20 18Z" fill="#7cc85a" /><path d="M8 9.500 16 18 8 26.500 0 18Z" fill="#7ba7f5" /><path d="M18 20 26 27.500 18 36 10 27.500Z" fill="#fbdf70" />
          <path d="M13 5 18 11V27M18 11 25 18" fill="none" stroke="#1c1c1c" strokeWidth="2" /><circle cx="18" cy="11.500" r="2.500" fill="#1c1c1c" /><circle cx="18" cy="26.500" r="2.500" fill="#1c1c1c" /><circle cx="25.500" cy="18" r="2.500" fill="#1c1c1c" />
        </App36>
        <App36 dot>
          <defs><Grad id="e1" a="#2ab0e8" b="#6ae04a" x2={1} y2={0.5} /><Grad id="e2" a="#0f8ae0" b="#0a58b0" /></defs>
          <path d="M0 15Q3 0 18 0Q35 0 36 15Q36 23 28 24.500Q21 25 21 22Q23 20 22.500 17Q21 11 13 11Q5 11 0 18Z" fill="url(#e1)" />
          <path d="M0 18Q5 9 14 11Q20 12.500 21 17Q14 16 13.500 23Q14 33 26 35Q10 39 3 29Q0 24 0 18Z" fill="url(#e2)" />
          <path d="M13.500 22Q15 29 24 29Q29 29 33 26.500Q30 33 24 35.500Q14 34 13.500 22Z" fill="#10529c" />
        </App36>
        <App36>
          <defs><Grad id="ou" a="#2a9df0" b="#0d5fb8" /></defs>
          <path d="M6 11 19 3.500Q21 2.500 23 3.500L36 12V29Q36 33 32 33H10Q6 33 6 29Z" fill="#1a72d0" /><path d="M10 11 20 4 30 9 16 20Z" fill="#38a6ef" /><path d="M36 13 17 26 7 33H32Q36 33 36 29Z" fill="#40d0f5" /><path d="M18 20 36 8V16L20 27Z" fill="#0b3f8c" /><rect x="0" y="9" width="18" height="18.500" rx="2" fill="url(#ou)" /><ellipse cx="9" cy="18.200" rx="4.200" ry="4.800" fill="none" stroke="#fff" strokeWidth="2.400" />
        </App36>
        <div className="flex w-[66px] shrink-0 flex-col items-center pt-[16px]">
          <svg width="36" height="36" viewBox="0 0 36 36">
            <circle cx="18" cy="18" r="18" fill="#fbc116" /><path d="M18 18 10.200 22.500 2.400 9A18 18 0 0 1 33.600 9H18Z" fill="#e33b2e" /><path d="M2.400 9 10.200 22.500Q13 27 18 27L25.800 22.500 18 36A18 18 0 0 1 2.400 9Z" fill="#229342" />
            <circle cx="18" cy="18" r="9" fill="#fff" /><circle cx="18" cy="18" r="7" fill="#2a6fe8" />
          </svg>
          <div className="mt-[6px] flex items-center"><div className="h-[5px] w-[22px] rounded-full bg-[#d99ae0]" /><div className="h-[2px] w-[14px] bg-[#9a9a9a]" /></div>
        </div>
        <App36 dot>
          <path d="M7 1Q13 0 16 1.500Q20 0 23 1Q31-1 34 6Q36 12 31 20L30 23 35 23Q32 27 26 27Q26 35 21 35.500Q16 36 15.500 28L14 23 9 25Q1 16 1 7Q2 2 7 1Z" fill="#336791" />
          <SiPostgresql size={36} color="#dfe7ee" />
        </App36>
        <App36 dot>
          <path d="M26 0 35 4V32L26 36 22 32 25 27V9L22 4Z" fill="#25a0f0" /><path d="M26 0 36 4V32L26 36V26.500V9.500Z" fill="#2ba6f5" /><path d="M26 0V9.500L5 26.500 1 24.500Q-.5 23 1 21.500Z" fill="#0a6cb4" /><path d="M26 36V26.500L5 9.500 1 11.500Q-.5 13 1 14.500Z" fill="#0f85d0" />
        </App36>
        <div className="mt-[4px] ml-[3px] flex h-[60px] w-[60px] flex-col items-center rounded-[7px] border border-[#363636] bg-[#292929] pt-[11px]">
          <svg width="36" height="36" viewBox="0 0 36 36">
            <defs><Grad id="pb1" a="#e8ad10" b="#c87b10" /><Grad id="pb2" a="#f5d24a" b="#e8ac14" /><Grad id="pb3" a="#f9e68a" b="#f0cd3e" /></defs>
            <path d="M19 0H32V36H19Z" fill="url(#pb1)" /><path d="M12 9H24V36H12Z" fill="url(#pb2)" /><path d="M4 18H16V36H4Z" fill="url(#pb3)" />
          </svg>
          <div className="mt-[6px] h-[5px] w-[24px] shrink-0 rounded-full bg-[#d99ae0]" />
        </div>
      </div>
      <svg width="18" height="12" viewBox="0 0 18 12" className="mt-[28px] ml-[104px]" fill="none" stroke="#f0f0f0" strokeWidth="2"><path d="M2 10 9 3 16 10" /></svg>
      <div className="ml-[31px] flex w-[34px] flex-col items-center pt-[12px] text-[16px] leading-[23px]">
        <T w={34}>ENG</T>
        <T w={18}>IN</T>
      </div>
      <svg width="100" height="24" viewBox="1696 1031 100 24" className="mt-[21px] ml-[27px]" fill="none" stroke="#f0f0f0" strokeWidth="1.600">
        <path d="M1698 1041Q1709 1029.500 1720 1041M1701.500 1045Q1709 1037.500 1716.500 1045M1705 1048.500Q1709 1045 1713 1048.500" /><circle cx="1709" cy="1050.500" r="2" fill="#f0f0f0" stroke="none" />
        <path d="M1734 1040H1738L1743 1035.500V1052L1738 1047.500H1734ZM1747 1040 1755.500 1048.500M1755.500 1040 1747 1048.500" />
        <path d="M1782 1036H1786.500Q1790 1036 1790 1039.500V1047Q1790 1050.500 1786.500 1050.500H1770M1791.500 1041V1047" strokeWidth="2" /><path d="M1770 1047Q1768 1038 1777 1032Q1783 1040 1779 1046Q1776 1049 1772 1047L1769.500 1051 1769 1049 1772 1045Z" fill="#f0f0f0" stroke="none" />
      </svg>
      <div className="mr-[29px] ml-auto flex flex-col items-end pt-[10px] text-[16px] leading-[24px]">
        <T w={64}>9:18 PM</T>
        <T w={73}>8/6/2025</T>
      </div>
    </div>
  );
}

export default function App() {
  return (
    <div className="flex h-[1080px] w-[1920px] flex-col overflow-hidden bg-[#141414] font-['Open_Sans','Noto_Sans',sans-serif]">
      <TitleBar />
      <MenuRow />
      <Ribbon />
      <div className="flex h-[717px] shrink-0">
        <Rail />
        <div className="flex w-[1536px] shrink-0 flex-col">
          <div className="flex">
            <Canvas />
            <div className="flex h-[664px] w-[49px] flex-col items-center border-l border-[#a8a8a8] bg-white pt-[23px]">
              <Dbl color="#222" />
              <svg width="14" height="14" viewBox="0 0 14 14" className="mt-[29px] ml-[6px]" stroke="#222" strokeWidth="1.500"><path d="M12.500 0V13M7.500 2.500V10.500M2.500 5V8" /></svg>
              <div className="mt-[13px] mr-[3px] h-[66px] w-[30px]">
                <div className="flex h-[30px] w-[66px] origin-top-left translate-x-[30px] rotate-90 items-center text-[20px] leading-[30px] font-semibold text-[#222]">
                  <T w={65}>Filters</T>
                </div>
              </div>
            </div>
          </div>
          <PageTabs />
        </div>
        <RightPanes />
      </div>
      <StatusBar />
      <Taskbar />
    </div>
  );
}
